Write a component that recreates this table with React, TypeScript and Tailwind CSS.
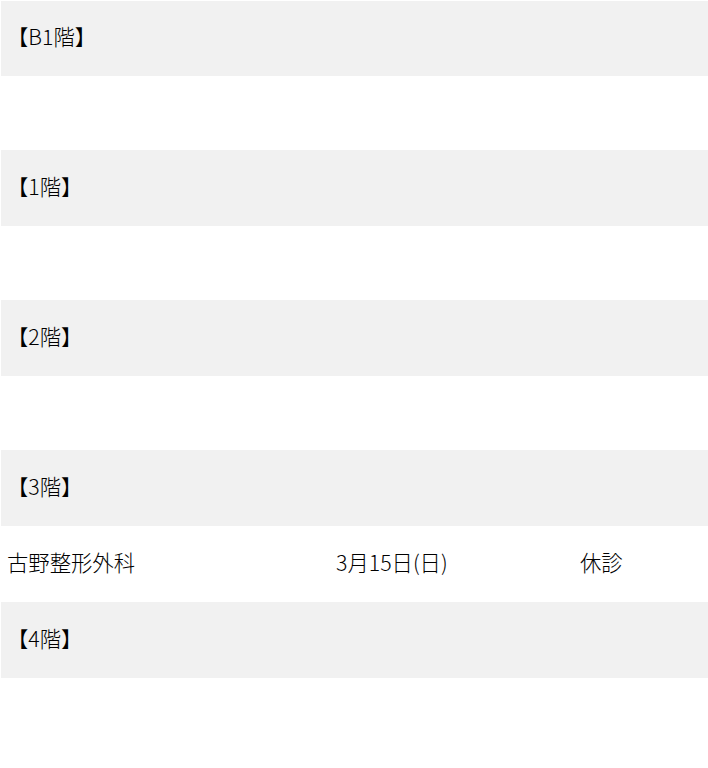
const floors = [
  { label: '【B1階】', clinics: [] as { name: string; date: string; note: string }[] },
  { label: '【1階】', clinics: [] },
  { label: '【2階】', clinics: [] },
  { label: '【3階】', clinics: [{ name: '古野整形外科', date: '3月15日(日)', note: '休診' }] },
  { label: '【4階】', clinics: [] },
]

const App = () => {
  return (
    <div
      className="min-h-screen bg-white pl-px text-[21.33px] font-light text-black"
      style={{ fontFamily: '"Noto Sans CJK JP", "Noto Sans", sans-serif' }}
    >
      <div className="flex flex-col border-t border-white">
        {floors.map((floor, i) => (
          <div key={floor.label} className="flex flex-col">
            <div
              className={
                i === 0
                  ? 'flex h-[75px] items-center bg-[#f1f1f1] px-[6px] pb-[5px]'
                  : 'flex h-[76px] items-center bg-[#f1f1f1] px-[6px] pb-[4px]'
              }
            >
              {floor.label}
            </div>
            {floor.clinics.length === 0 ? (
              <div className="h-[74px]"></div>
            ) : (
              floor.clinics.map((c) => (
                <div key={c.name} className="grid h-[76px] grid-cols-[329px_244px_1fr] items-center pb-[4px]">
                  <div className="px-[6px]">{c.name}</div>
                  <div className="px-[6px]">{c.date}</div>
                  <div className="px-[6px]">{c.note}</div>
                </div>
              ))
            )}
          </div>
        ))}
      </div>
    </div>
  )
}

export default App
